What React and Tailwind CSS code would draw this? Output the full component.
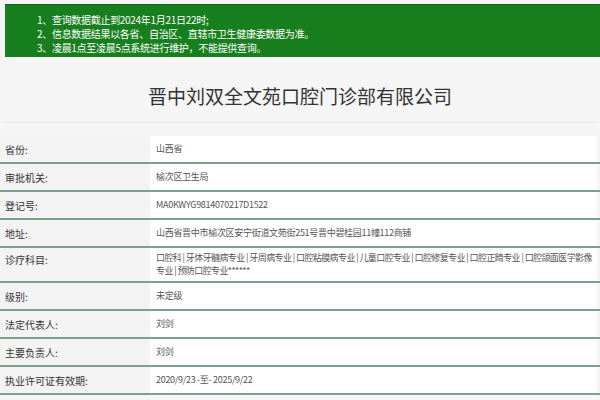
import React from "react";

const rows = [
  { label: "省份:", value: "山西省" },
  { label: "审批机关:", value: "榆次区卫生局" },
  { label: "登记号:", value: "MA0KWYG9814070217D1522" },
  { label: "地址:", value: "山西省晋中市榆次区安宁街道文苑街251号晋中碧桂园11幢112商铺" },
  {
    label: "诊疗科目:",
    value:
      "口腔科 | 牙体牙髓病专业 | 牙周病专业 | 口腔粘膜病专业 | 儿童口腔专业 | 口腔修复专业 | 口腔正畸专业 | 口腔颌面医学影像专业 | 预防口腔专业******",
    tall: true,
  },
  { label: "级别:", value: "未定级" },
  { label: "法定代表人:", value: "刘剑" },
  { label: "主要负责人:", value: "刘剑" },
  { label: "执业许可证有效期:", value: "2020/9/23 -至- 2025/9/22" },
];

export default function App() {
  return (
    <div
      className="w-[600px] h-[400px] overflow-hidden bg-[#f5f5f5] pt-[4px]"
      style={{ fontFamily: '"Noto Sans CJK SC", "Noto Sans", sans-serif' }}
    >
      {/* notice banner */}
      <div className="ml-[5px] h-[53px] bg-[#187f1e] border-t border-[#106614] pl-[32px] pt-[8px] text-white text-[10px] tracking-[-0.3px] leading-[14px]">
        <div>1、查询数据截止到2024年1月21日22时;</div>
        <div>2、信息数据结果以各省、自治区、直辖市卫生健康委数据为准。</div>
        <div>3、凌晨1点至凌晨5点系统进行维护，不能提供查询。</div>
      </div>

      {/* title */}
      <div className="mx-[5px] h-[66px] border-b border-[#e8e8e8] flex items-center justify-center">
        <h1 className="text-[19px] text-[#333] font-normal pt-[14px]">
          晋中刘双全文苑口腔门诊部有限公司
        </h1>
      </div>

      {/* details table */}
      <div className="mt-[13px] w-[600px]">
        {rows.map((r, i) => (
          <div key={i} className="flex border-b-2 border-[#7d9f8f]">
            <div
              className={`w-[150px] shrink-0 bg-[#f3f3f3] pl-[5px] text-[10px] text-[#333] flex ${
                r.tall ? "h-[33px] items-start pt-[4px]" : "h-[26px] items-center"
              }`}
            >
              {r.label}
            </div>
            <div
              className={`w-[447px] bg-white pl-[6px] pr-[4px] text-[9px] text-[#555] ${
                r.tall
                  ? "h-[33px] pt-[3px] leading-[13px] tracking-[-0.6px]"
                  : "h-[26px] flex items-center tracking-[-0.3px]"
              }`}
            >
              {r.value}
            </div>
          </div>
        ))}
      </div>
    </div>
  );
}
